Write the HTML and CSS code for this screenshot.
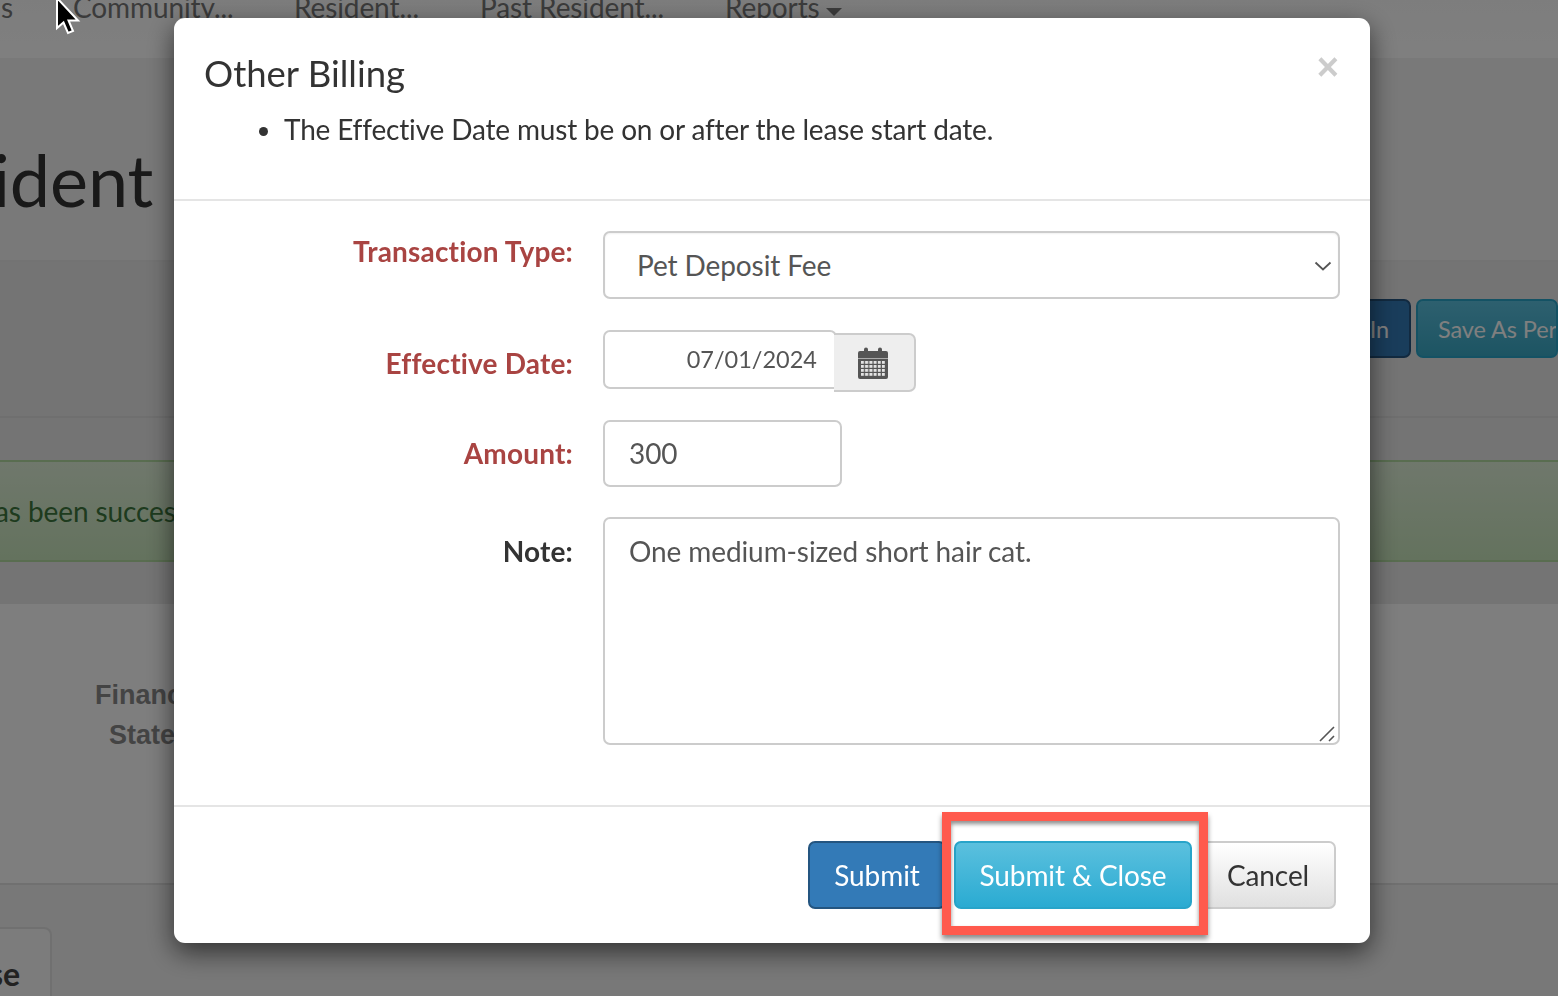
FILE: index.html
```html
<!DOCTYPE html>
<html lang="en">
<head>
<meta charset="utf-8">
<title>Other Billing</title>
<link rel="stylesheet" href="styles.css">
</head>
<body>
<div class="page">
  <nav class="nav">
    <span class="nav-s">s</span>
    <span class="nav-community">Community...</span>
    <span class="nav-resident">Resident...</span>
    <span class="nav-past">Past Resident...</span>
    <span class="nav-reports">Reports<i class="caret"></i></span>
  </nav>
  <header class="page-head"><h1 class="page-title">Resident</h1></header>
  <section class="toolbar">
    <span class="bg-btn bg-primary">Check In</span>
    <span class="bg-btn bg-info">Save As Perm</span>
  </section>
  <div class="gap-a"></div>
  <div class="alert">Lease has been successfully saved</div>
  <div class="gap-b"></div>
  <section class="panel">
    <p class="fin fin-1">Financial</p>
    <p class="fin fin-2">Statement</p>
  </section>
  <div class="tabs"><span class="tab">Lease</span></div>
</div>

<div class="backdrop"></div>

<div class="modal">
  <div class="modal-header">
    <button class="close" type="button">×</button>
    <h4 class="modal-title">Other Billing</h4>
    <ul class="errors"><li>The Effective Date must be on or after the lease start date.</li></ul>
  </div>
  <div class="modal-body">
    <div class="row">
      <label class="label label-req label-first">Transaction Type:</label>
      <div class="select">
        <span>Pet Deposit Fee</span>
        <svg class="chev" width="18" height="10" viewBox="0 0 18 10"><path d="M1.500 1.500 9 8.500l7.500-7" fill="none" stroke="#555" stroke-width="1.800"/></svg>
      </div>
    </div>
    <div class="row">
      <label class="label label-req">Effective Date:</label>
      <div class="date-group">
        <div class="date-input">07/01/2024</div>
        <div class="date-addon">
          <svg width="30" height="32" viewBox="0 0 30 32">
            <defs>
              <pattern id="cells" x="3" y="14" width="4.200" height="4" patternUnits="userSpaceOnUse">
                <rect width="3" height="2.800" fill="#e4e4e4"/>
              </pattern>
            </defs>
            <path fill="#555" d="M2 4h4V2.500a2 2 0 0 1 4 0V4h10V2.500a2 2 0 0 1 4 0V4h4a2 2 0 0 1 2 2v24a2 2 0 0 1-2 2H2a2 2 0 0 1-2-2V6a2 2 0 0 1 2-2z"/>
            <rect x="0" y="11" width="30" height="1" fill="#aaa"/>
            <rect x="3" y="14" width="24" height="16" fill="url(#cells)"/>
          </svg>
        </div>
      </div>
    </div>
    <div class="row">
      <label class="label label-req">Amount:</label>
      <div class="amount">300</div>
    </div>
    <div class="row">
      <label class="label">Note:</label>
      <div class="note">One medium-sized short hair cat.
        <svg class="grip" width="18" height="16" viewBox="0 0 18 16"><path d="M1 15 15 1M10 15l5-5" stroke="#555" stroke-width="1.600" fill="none"/></svg>
      </div>
    </div>
  </div>
  <div class="modal-footer">
    <button class="btn btn-submit" type="button">Submit</button>
    <button class="btn btn-close" type="button">Submit &amp; Close</button>
    <button class="btn btn-cancel" type="button">Cancel</button>
    <div class="highlight"></div>
  </div>
</div>

<svg class="cursor" width="26" height="38" viewBox="0 0 26 38">
  <path d="M2 1V31L8.500 25.500 13 36 18 34 13.500 23.500H23z" fill="#000" stroke="#fff" stroke-width="2"/>
</svg>
</body>
</html>
```
FILE: styles.css
```css
* { box-sizing: border-box; }
html, body { margin: 0; padding: 0; height: 100%; overflow: hidden; }
body { font-family: Lato, "Liberation Sans", sans-serif; color: #333; font-size: 28px; letter-spacing: -.1px; }

.page { height: 996px; overflow: hidden; background: #fff; }

.nav { height: 58px; background: linear-gradient(#fbfbfb, #fff); line-height: 14px; color: #777; display: flex; white-space: nowrap; letter-spacing: -.1px; }
.nav-s { width: 73px; padding-left: 1px; }
.nav-community { width: 221px; }
.nav-resident { width: 186px; }
.nav-past { width: 245px; }
.caret { display: inline-block; border-top: 8px solid #777; border-left: 8px solid transparent; border-right: 8px solid transparent; margin-left: 6px; vertical-align: 2px; }

.page-head { height: 202px; background: #f3f3f3; overflow: hidden; }
.page-title { margin: 0 0 0 -119px; padding-top: 76px; font-size: 72px; font-weight: 400; line-height: 90px; color: #333; white-space: nowrap; }

.toolbar { height: 158px; background: #e9e9e9; border-top: 2px solid #e6e6e6; border-bottom: 2px solid #dedede; padding-top: 37px; display: flex; justify-content: flex-end; gap: 5px; overflow: hidden; white-space: nowrap; }
.bg-btn { height: 59px; line-height: 57px; font-size: 23.500px; color: #fff; border-radius: 7px; flex: none; }
.bg-primary { width: 190px; background: #337ab7; border: 2px solid #245580; text-align: right; padding-right: 20px; }
.bg-info { width: 142px; background: linear-gradient(#5bc0de, #3aa9c6); border: 2px solid #28a4c9; padding-left: 20px; overflow: hidden; }

.gap-a { height: 42px; background: #e9e9e9; }
.alert { height: 102px; background: linear-gradient(#dff0d8, #c8e5bc); border-top: 2px solid #b2dba1; border-bottom: 2px solid #b2dba1; color: #3c763d; padding-top: 19px; line-height: 60px; white-space: nowrap; text-indent: -96px; }
.gap-b { height: 42px; background: #e9e9e9; }

.panel { height: 281px; background: #fcfcfc; border-bottom: 2px solid #e0e0e0; padding-top: 71px; white-space: nowrap; }
.fin { margin: 0; font-family: "Liberation Sans", Arial, sans-serif; font-weight: 700; font-size: 27px; line-height: 40px; color: #888; letter-spacing: 0; }
.fin-1 { padding-left: 95px; }
.fin-2 { padding-left: 109px; }

.tabs { height: 111px; background: #f0f0f0; padding-top: 42px; overflow: hidden; }
.tab { display: block; width: 52px; height: 80px; border: 2px solid #e0e0e0; border-left: 0; border-radius: 0 8px 0 0; font-weight: 700; font-size: 32px; line-height: 90px; text-align: right; padding-right: 30px; direction: rtl; overflow: hidden; white-space: nowrap; color: #444; background: #f8f8f8; }

.backdrop { position: fixed; inset: 0; background: rgba(0, 0, 0, .5); }

.modal { position: fixed; left: 174px; top: 18px; width: 1196px; height: 925px; background: #fff; border-radius: 11px; box-shadow: 0 9px 27px rgba(0, 0, 0, .6); display: flex; flex-direction: column; }

.modal-header { position: relative; height: 183px; border-bottom: 2px solid #e5e5e5; padding: 29px 30px 0; }
.modal-title { margin: 0; font-size: 36.500px; font-weight: 400; line-height: 52px; color: #333; letter-spacing: 0; }
.close { position: absolute; right: 31px; top: 23px; padding: 0; border: 0; background: none; font: 700 38px/52px "Liberation Sans", Arial, sans-serif; color: #ccc; }
.errors { margin: 10px 0 0; padding: 0 0 0 80px; line-height: 40px; color: #333; letter-spacing: -.17px; }

.modal-body { flex: 1; padding: 30px 30px 0 0; display: flex; flex-direction: column; gap: 32px; }
.row { display: grid; grid-template-columns: 399px 1fr; column-gap: 30px; align-items: start; }
.label { text-align: right; font-weight: 700; line-height: 40px; padding-top: 14px; color: #333; letter-spacing: .18px; }
.label-req { color: #a94442; }
.label-first { padding-top: 0; }

.select { position: relative; height: 68px; margin-bottom: -2px; border: 2px solid #ccc; border-radius: 7px; padding-left: 32px; line-height: 65px; color: #555; background: #fff; box-shadow: inset 0 1px 2px rgba(0,0,0,.06); }
.chev { position: absolute; right: 6px; top: 28px; }

.date-group { display: flex; height: 58px; margin: 1px 0 -1px; }
.date-input { width: 234px; height: 59px; border: 2px solid #ccc; border-radius: 7px 7px 0 7px; text-align: right; padding-right: 18px; font-size: 23.500px; line-height: 54px; color: #555; background: #fff; letter-spacing: 0; }
.date-addon { flex: none; width: 82px; height: 59px; margin: 3px 0 0 -3px; border: 2px solid #ccc; border-left: 0; border-radius: 0 7px 7px 0; background: #eee; display: flex; align-items: center; justify-content: center; padding-right: 2px; }

.amount { width: 239px; height: 67px; margin: 1px 0 -2px; border: 2px solid #ccc; border-radius: 7px; padding-left: 24px; line-height: 63px; color: #555; }
.note { position: relative; height: 228px; border: 2px solid #ccc; border-radius: 7px; padding: 12px 24px; line-height: 40px; color: #555; }
.grip { position: absolute; right: 1px; bottom: 1px; }

.modal-footer { position: relative; height: 138px; border-top: 2px solid #e5e5e5; padding: 34px 34px 0 0; display: flex; justify-content: flex-end; gap: 8px; align-items: flex-start; }
.btn { height: 68px; border-radius: 7px; font: 400 28px/1 Lato, sans-serif; padding: 0; letter-spacing: -.1px; }
.btn-submit { width: 138px; color: #fff; background: #337ab7; border: 2px solid #245580; }
.btn-close { width: 238px; color: #fff; background: linear-gradient(#5bc0de, #2aabd2); border: 2px solid #28a4c9; }
.btn-cancel { width: 136px; color: #333; background: linear-gradient(#fff, #e0e0e0); border: 2px solid #ccc; }
.highlight { position: absolute; left: 768px; top: 5px; width: 266px; height: 123px; border: 9px solid #ff5a4d; box-shadow: 0 4px 5px rgba(0,0,0,.45), inset 0 3px 4px rgba(0,0,0,.45); }

.cursor { position: fixed; left: 55px; top: -3px; }
```
